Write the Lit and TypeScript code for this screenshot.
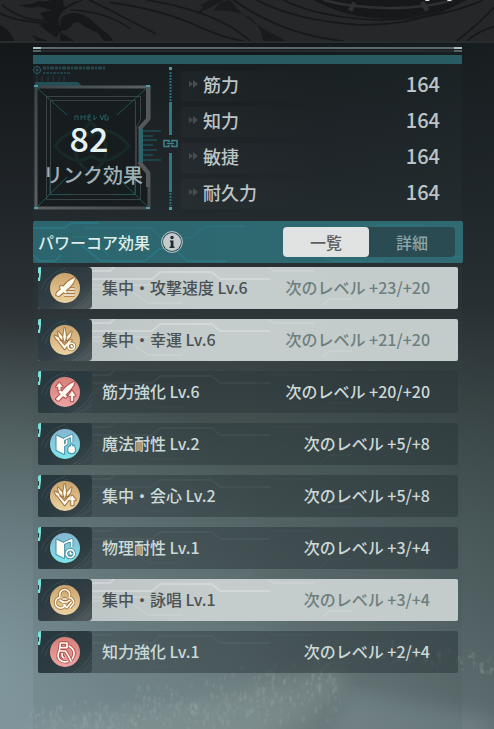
import { LitElement, html, svg, css, SVGTemplateResult } from "lit";
import { customElement, property, state } from "lit/decorators.js";
import { classMap } from "lit/directives/class-map.js";

type Tone = "gold" | "red" | "blue";
interface Effect {
  name: string;
  next: string;
  icon: string;
  tone: Tone;
  active: boolean;
}

const STATS = [
  ["筋力", "164"],
  ["知力", "164"],
  ["敏捷", "164"],
  ["耐久力", "164"],
];

const EFFECTS: Effect[] = [
  { name: "集中・攻撃速度 Lv.6", next: "次のレベル +23/+20", icon: "speed", tone: "gold", active: true },
  { name: "集中・幸運 Lv.6", next: "次のレベル +21/+20", icon: "luck", tone: "gold", active: true },
  { name: "筋力強化 Lv.6", next: "次のレベル +20/+20", icon: "strength", tone: "red", active: false },
  { name: "魔法耐性 Lv.2", next: "次のレベル +5/+8", icon: "magic", tone: "blue", active: false },
  { name: "集中・会心 Lv.2", next: "次のレベル +5/+8", icon: "critical", tone: "gold", active: false },
  { name: "物理耐性 Lv.1", next: "次のレベル +3/+4", icon: "physical", tone: "blue", active: false },
  { name: "集中・詠唱 Lv.1", next: "次のレベル +3/+4", icon: "chant", tone: "gold", active: true },
  { name: "知力強化 Lv.1", next: "次のレベル +2/+4", icon: "intellect", tone: "red", active: false },
];

const TONES: Record<Tone, [string, string, string]> = {
  gold: ["#c9a26c", "#ecd3a2", "#a3733a"],
  red: ["#d48078", "#eda3a4", "#b04a4b"],
  blue: ["#86b5d0", "#7fe6ea", "#3f8aa5"],
};

/* Glyphs sit on a 90-unit disc: `fill` holds solid parts, `line` holds strokes. */
interface Glyph {
  fill?: string;
  line?: string;
}
const BURST = "M44 10l4 26-4 14-4-14zM24 20l12 14 1 11-9-9zM64 20L52 34l-1 11 9-9zM14 32l12 6 3 8-9-3zM23 45l8 3 13 14 13-14 8-3-21 27z";
const PAGE = "M20 20l22 11v43l-22-11z";
const GLYPHS: Record<string, Glyph> = {
  speed: {
    fill: "M75 14q-4 20-28 38l4 6-4 3-7-4-14 12-7-3 2-7 12-10-3-7 4-3 6 2q14-18 35-27z",
    line: "M60 48h14M52 57h22M42 66h32",
  },
  luck: { fill: BURST, line: "M64 54a10 10 0 1 1-.1 0M64 59v6h5" },
  strength: {
    fill: "M73 15q-4 18-27 38l5 5-4 4-8-5-14 14-7-5 14-14-6-8 4-4 6 4q15-20 37-29zM28 17l9 12h-6v9h-6v-9h-6zM66 42l10 14h-7v16h-6V56h-7z",
  },
  magic: {
    fill: PAGE + "M64 46l4 7 3-3q4 8 4 13 0 9-10 9t-10-9q0-7 4-11l3 3z",
    line: "M42 31l23-11v20M42 50l8-6V32",
  },
  critical: { fill: BURST + "M67 44l10 13h-7v15h-6V57h-7z" },
  physical: {
    fill: PAGE,
    line: "M42 31l23-11v22M61 50a12 12 0 1 1-.1 0M61 56v7h6",
  },
  chant: {
    line: "M30 34a15 15 0 1 1 28 0M32 37a16 16 0 1 0 15 22M57 37a16 16 0 0 1 14 16M29 45q16 14 31 0M38 42h12M72 54L60 68M65 50L50 68L40 58",
  },
  intellect: {
    line: "M31 18h20v14H35l-5-2zM30 30l-2 12h18l9 14 9 18M27 43q-8 20 6 28 10 6 22 2M56 26q18 10 16 26-1 8-6 14M37 48q-4 10 6 16",
  },
};

@customElement("effect-row")
class EffectRow extends LitElement {
  @property({ attribute: false }) effect!: Effect;

  static styles = css`
    :host { display: block; }
    .row {
      display: flex;
      align-items: center;
      height: 42px;
      border-radius: 2px;
      overflow: hidden;
      color: #ccd9d7;
      background: linear-gradient(90deg, #2a363a78, #2a363a88);
      font-weight: 500;
    }
    .row.active {
      color: #4a5254;
      background: linear-gradient(90deg, #bac2c3, #c4cccc 40%, #c3cccb);
    }
    .badge {
      flex: none;
      width: 54px;
      height: 42px;
      border-radius: 0 4px 4px 0;
      background: linear-gradient(150deg, #26373d, #2c3b40 60%, #3c494d);
    }
    .active .badge { background: linear-gradient(150deg, #26373d, #323e43 60%, #535c60); }
    .body {
      flex: 1;
      align-self: stretch;
      display: grid;
      min-width: 0;
    }
    .body > * { grid-area: 1 / 1; }
    .circuit { width: 260px; height: 42px; }
    .texts {
      display: flex;
      justify-content: space-between;
      align-items: center;
      padding: 0 28px 2px 10px;
      white-space: nowrap;
    }
    .active .next { color: #6d7e7d; }
  `;

  private glyph(color: string, fillWidth: number, lineWidth: number) {
    const { fill = "", line = "" } = GLYPHS[this.effect.icon];
    return svg`
      <path d=${fill} fill=${color} stroke=${color} stroke-width=${fillWidth} />
      <path d=${line} fill="none" stroke=${color} stroke-width=${lineWidth} />`;
  }

  render() {
    const { name, next, tone, active } = this.effect;
    const [top, bottom, edge] = TONES[tone];
    return html`
      <div class=${classMap({ row: true, active })}>
        <svg class="badge" viewBox="0 0 54 42" aria-hidden="true">
          <defs>
            <linearGradient id="disc" x2="0" y2="1">
              <stop stop-color=${top} /><stop offset="1" stop-color=${bottom} />
            </linearGradient>
          </defs>
          <g fill="none" stroke="#71858a" stroke-opacity=".3" stroke-width=".8">
            <path d="M3 23Q8 7 28 1M7 25Q11 9 30 4" /><path d="M34 42Q47 36 54 22M38 42Q49 38 54 28M44 42L54 33" />
          </g>
          <path d="M0 0h3v6l-1 8H0v-3l1-1V6H0z" fill="#78e2d8" />
          <circle cx="27" cy="21" r="15" fill="url(#disc)" />
          <g transform="translate(12 6) scale(.3333)" stroke-linejoin="round">
            ${this.glyph(edge, 7, 10)}
            ${this.glyph("#fffdf2", 1, 5)}
          </g>
        </svg>
        <div class="body">
          <svg class="circuit" viewBox="0 0 260 42" aria-hidden="true">
            <g fill="none" stroke=${active ? "#ffffff" : "#9fb4b4"} stroke-opacity=${active ? ".25" : ".07"}>
              <path stroke-width="2" d="M0 4h18l4-4M0 12h60l8-7h52l8 7h50" />
              <path d="M0 18h60M0 22h36l20 14h34M176 0l6 4h40M230 38l8-6h22" />
            </g>
          </svg>
          <div class="texts"><span>${name}</span><span class="next">${next}</span></div>
        </div>
      </div>`;
  }
}

/* Frost on the grass: a fixed pseudo-random scatter along the slope. */
const FROST = Array.from({ length: 460 }, (_, i) => {
  const r = (n: number) => {
    const v = Math.sin(i * 12.9898 + n * 78.233) * 43758.5453;
    return v - Math.floor(v);
  };
  const far = i % 7 === 0;
  const x = far ? 360 + r(1) * 134 : 30 + r(1) * 310;
  const y = far ? 640 + (x - 360) * 0.12 + r(2) * 18 : 728 - x * 0.12 + (r(2) + r(6) - 1) * (14 + x * 0.08);
  return { x, y, rx: 1 + r(3), ry: 1.5 + r(4) * 2.5, o: 0.03 + r(5) * 0.11 };
});

@customElement("app-root")
class AppRoot extends LitElement {
  @state() private view = "list";

  static styles = css`
    :host {
      display: block;
      position: relative;
      min-height: 100vh;
      overflow: hidden;
      background: #1b2023;
      color: #bcc4c6;
      font: 400 16px/24px "Noto Sans CJK JP", "Noto Sans", sans-serif;
    }
    .scene {
      position: absolute;
      inset: 0;
      width: 100%;
      height: 100%;
    }
    .page { position: relative; }
    .banner {
      display: block;
      width: 100%;
      height: 41px;
      border-bottom: 2px solid #292c2d;
    }
    main { margin: 4px 32px 0 33px; }
    .rail {
      height: 2px;
      margin-bottom: 1px;
      background: linear-gradient(90deg, #a9bfc2 8px, #5c686a 8px calc(100% - 8px), #a9bfc2 calc(100% - 8px));
    }
    .rail.dim {
      margin-bottom: 3px;
      background: linear-gradient(90deg, #566365 8px, #252c2e 8px calc(100% - 8px), #566365 calc(100% - 8px));
    }
    .bar { height: 9px; background: #295b62; }
    .summary { display: flex; height: 157px; }
    .emblem { display: grid; flex: none; width: 148px; }
    .emblem > * { grid-area: 1 / 1; }
    .art { width: 148px; height: 148px; }
    .score {
      display: flex;
      flex-direction: column;
      align-items: center;
      width: 120px;
      padding-top: 54px;
    }
    .number {
      padding-right: 8px;
      font-size: 34px;
      line-height: 40px;
      font-weight: 500;
      color: #e4f3f1;
    }
    .caption {
      font-size: 20px;
      line-height: 34px;
      font-weight: 500;
      color: #9eb0b6;
      white-space: nowrap;
    }
    .stats {
      flex: 1;
      display: flex;
      flex-direction: column;
      gap: 6px;
      margin: 7px 0 0;
    }
    .stat {
      display: flex;
      align-items: center;
      height: 30px;
      box-sizing: border-box;
      padding: 0 22px 4px 8px;
      background: linear-gradient(90deg, #7b83830e, #7b838300 50%);
      font-weight: 500;
    }
    .chev { width: 9px; height: 8px; margin-right: 5px; }
    dt { flex: 1; font-size: 18px; }
    dd { margin: 0; font-size: 20px; }
    .heading {
      display: grid;
      height: 42px;
      margin-right: -1px;
      border-radius: 2px;
      overflow: hidden;
      background: linear-gradient(90deg, #2c656d, #306b73);
    }
    .heading > * { grid-area: 1 / 1; }
    .traces { width: 430px; height: 42px; }
    .tools { display: flex; align-items: center; padding: 0 8px 0 5px; }
    h2 {
      margin: 0 11px 0 0;
      font-size: 16px;
      font-weight: 500;
      color: #dfecea;
      white-space: nowrap;
    }
    button {
      border: 0;
      padding: 0;
      font: inherit;
      cursor: pointer;
      background: none;
    }
    .info { width: 22px; height: 22px; }
    .info svg { display: block; }
    .tabs {
      display: flex;
      width: 172px;
      margin-left: auto;
      border-radius: 4px;
      background: #294b51;
    }
    .tab {
      flex: 1;
      height: 30px;
      border-radius: 4px;
      color: #8ea5a8;
      font-weight: 500;
    }
    .tab.on { background: #e1e2e2; color: #5c5f61; }
    .effects {
      display: flex;
      flex-direction: column;
      gap: 10px;
      margin: 4px 4px 56px 5px;
      padding: 0;
      list-style: none;
    }
  `;

  private scene() {
    return html`
      <svg class="scene" viewBox="0 0 494 729" preserveAspectRatio="none" aria-hidden="true">
        <defs>
          <linearGradient id="sky" x2="0" y2="1">
            <stop offset=".05" stop-color="#131719" /><stop offset=".28" stop-color="#202529" />
            <stop offset=".42" stop-color="#2b3134" /><stop offset=".52" stop-color="#3c4547" />
            <stop offset=".62" stop-color="#4b5858" /><stop offset=".72" stop-color="#586769" />
            <stop offset=".85" stop-color="#657577" /><stop offset="1" stop-color="#78878a" />
          </linearGradient>
          <radialGradient id="glow" gradientUnits="userSpaceOnUse" cx="0" cy="0" r="1"
            gradientTransform="translate(-30 660) scale(330 340)">
            <stop stop-color="#8cabb5" stop-opacity=".6" /><stop offset=".5" stop-color="#86a3ab" stop-opacity=".26" />
            <stop offset="1" stop-color="#88a3ab" stop-opacity="0" />
          </radialGradient>
          <linearGradient id="shade"><stop offset=".5" stop-color="#202d30" stop-opacity="0" /><stop offset="1" stop-color="#202d30" stop-opacity=".3" /></linearGradient>
          <filter id="soft"><feGaussianBlur stdDeviation="9" /></filter>
        </defs>
        <path d="M0 0h494v729H0z" fill="url(#sky)" />
        <path d="M0 200h494v529H0z" fill="url(#glow)" />
        <path d="M0 0h494v729H0z" fill="url(#shade)" />
        <path d="M40 720q140-8 290-52l20 12q-40 50-120 70H20z" fill="#a2b1ac" opacity=".28" filter="url(#soft)" />
        <path d="M348 690l146 30v20H330z" fill="#8fa3ac" opacity=".3" filter="url(#soft)" />
        ${FROST.map((f) => svg`<ellipse cx=${f.x} cy=${f.y} rx=${f.rx} ry=${f.ry} fill="#c6d4cf" opacity=${f.o} />`)}
        <path d="M33 64h429v665H33z" fill="#3d4d4c" opacity=".1" />
      </svg>`;
  }

  private banner() {
    return html`
      <svg class="banner" viewBox="0 0 1482 123" preserveAspectRatio="xMidYMin slice" aria-hidden="true">
        <path d="M0 0h1482v123H0z" fill="#262728" />
        <g fill="#16181a">
          <path d="M110 0q35 12 58-10h22q-4 22 6 32 30-22 56-22-58 22-70 42-14 26 4 46l-18 25-52-38 24-6-20-30 34-8-38-12q-30 10-60-5 40 2 62-12z" />
          <path d="M182 78q-8-32 32-38 28-6 56 18l56 46 14 19h-28l-18-24-42-20q-22-22-34-6-12 22-42 20l46 30h-42z" />
          <path d="M0 74q28 12 44 49H0zM95 105l50 18h-34z" />
          <path d="M628 0h46l-88 44 24-24-10-2zM660 8l30-8q40 62 170 123h-70q-6-46-40-70-44-26-110-21z" fill="#191b1c" />
          <path d="M940 0h460l-66 30q-190 55-344-6z" />
        </g>
        <path d="M690 36q90 20 96 87h-30q-10-60-90-80z" fill="#262728" />
        <g fill="none" stroke="#16181a" stroke-width="5">
          <path d="M440 0q180 30 270 92l40 30M268 0q90 44 200 102M210 30q110 4 180 56M5 14q60 48 130 48M0 40q44 24 140 30M330 8q160 20 280 78 66 28 120 37" />
          <path d="M700 0q150 105 330 123M770 0q120 62 300 74 190 6 320-74M1482 22q-50 54-112 101M1482 80q-50 14-80 43" />
          <path d="M850 0q110 54 290 60 180-2 310-60" />
        </g>
        <g fill="none" stroke="#2e3030" stroke-width="8">
          <path d="M970 0q80 22 190 24T1360 0" /><path d="M1064 8l-14 24M1266 6l16 26" stroke-width="14" />
        </g>
        <path d="M1276 0h12v3h-12zM1342 0h12v3h-12z" fill="#dce1e1" />
      </svg>`;
  }

  private emblem() {
    return html`
      <svg class="art" viewBox="0 0 148 148" aria-hidden="true">
        <defs><linearGradient id="metal" x2="1" y2="1">
          <stop stop-color="#3b4649" /><stop offset=".5" stop-color="#5c6062" /><stop offset="1" stop-color="#45494b" />
        </linearGradient></defs>
        <g fill="none" stroke="#2c6169">
          <circle cx="4" cy="6" r="3.5" /><circle cx="4" cy="6" r="1" />
          <path d="M10 4h62" stroke-width="3" stroke-dasharray="3 1 2 1 4 1" opacity=".6" />
          <path d="M10 9h28" stroke-width="2" stroke-dasharray="2 1 3 1" opacity=".5" />
          <path d="M4 10v8M9 12v6M15 12v6M20 12v6M26 12v6M31 12v6" opacity=".4" />
        </g>
        <path d="M2 18h43l4 4H2z" fill="#235057" />
        <path d="M3 23h113v32l-9 10v33l9 11v35H3z" fill="#171c1e" stroke="url(#metal)" stroke-width="3" />
        <path d="M115 24v31l-9 10M106 98l9 11v14" fill="none" stroke="#54585a" stroke-width="4" />
        <g fill="none" stroke="#3b4245">
          <path d="M13.500 32.500h94v23l-4 7v38l4 7v28h-94z" /><path d="M17.500 36.500h85v94h-85z" />
        </g>
        <g fill="none" stroke="#1f5457">
          <path d="M2 22l32 29M116 22L84 51M4 143l30-30M115 143L86 115" />
          <path d="M17 130.500h20M82 130.500h20M17 110v20M102 110v20" />
        </g>
        <g fill="none" stroke="#1b4b4a" stroke-width="3" opacity=".28">
          <path d="M22 82q18-24 36-10 18-14 38 10-20 22-38 10-18 12-36-10z" />
          <path d="M58 58q-20 20-14 36 6 12 14 14 8-2 14-14 6-16-14-36z" />
        </g>
        <path d="M42 56v-4h3v4M48 51v5M48 53h4M52 51v5M58 51h-3v5h3M55 53h3M61 51v5l3-3M67 51l2 5 2-5M74 51h-2v5h3v-4" fill="none" stroke="#256163" />
        <path d="M107 65h3v33h-3z" fill="#2b656d" />
        <path d="M110 67h18M110 72h10M110 76h14M110 81h10M110 86h14M110 91h10M110 96h18" stroke="#1f4d54" stroke-width="1.500" />
        <g fill="#4c9ea5">
          <path d="M1 21h4v2H1zM113 21h4v2h-4zM1 143h4v2H1zM113 143h4v2h-4z" />
          <path d="M136 3h3v3h-3zM136 143h3v3h-3z" />
        </g>
        <path d="M137.500 8v30M137.500 129v13" stroke="#2b7078" stroke-width="2" stroke-dasharray="2 1" />
        <path d="M137.500 38v33M137.500 89v39" stroke="#2f7882" stroke-width="3" />
        <path d="M136 78v-1.500h-5v6h5V81M139 78v-1.500h5v6h-5V81M134 79.500h7" fill="none" stroke="#3d858c" stroke-width="1.500" />
      </svg>`;
  }

  private tab(id: string, label: string) {
    const on = this.view === id;
    return html`<button
      class=${classMap({ tab: true, on })}
      role="tab"
      aria-selected=${on ? "true" : "false"}
      @click=${() => (this.view = id)}
    >${label}</button>`;
  }

  render() {
    return html`
      ${this.scene()}
      <div class="page">
        ${this.banner()}
        <main>
          <div class="rail"></div>
          <div class="rail dim"></div>
          <div class="bar"></div>
          <section class="summary">
            <div class="emblem">
              ${this.emblem()}
              <div class="score"><span class="number">82</span><span class="caption">リンク効果</span></div>
            </div>
            <dl class="stats">
              ${STATS.map(([label, value]) => html`
                <div class="stat">
                  <svg class="chev" viewBox="0 0 9 8" aria-hidden="true"><path d="M0 1l4 3-4 3zM4 0l5 4-5 4z" fill="#474d4e" /></svg>
                  <dt>${label}</dt><dd>${value}</dd>
                </div>`)}
            </dl>
          </section>
          <div class="heading">
            <svg class="traces" viewBox="0 0 430 42" aria-hidden="true">
              <g fill="none" stroke="#2b8b97" stroke-opacity=".4">
                <path d="M0 7h32l6-5h28M48 24l20 16h44l14-12h16l12 12h40M0 34l6 6h16l6-6" stroke-width="2" />
                <path d="M52 7h66l10 10h30l14-12h40M40 16h14l24 20M250 34h40l8 6h50l8-6h30M330 16l14-12h46M400 26l14 10h16" />
              </g>
            </svg>
            <div class="tools">
              <h2>パワーコア効果</h2>
              <button class="info" aria-label="情報">
                <svg width="22" height="22" viewBox="0 0 22 22" aria-hidden="true">
                  <circle cx="11" cy="11" r="10.400" fill="#28484e" stroke="#bfd0d2" />
                  <circle cx="11" cy="11" r="9" fill="#c3cbcd" />
                  <circle cx="11" cy="6.500" r="1.700" fill="#252c2f" />
                  <path d="M9 9.500H12.500V15.500H13.500V17H8.500V15.500H9.700V11H9z" fill="#252c2f" />
                </svg>
              </button>
              <div class="tabs" role="tablist">${this.tab("list", "一覧")}${this.tab("detail", "詳細")}</div>
            </div>
          </div>
          <ul class="effects">
            ${EFFECTS.map((e) => html`<li><effect-row .effect=${e}></effect-row></li>`)}
          </ul>
        </main>
      </div>`;
  }
}
